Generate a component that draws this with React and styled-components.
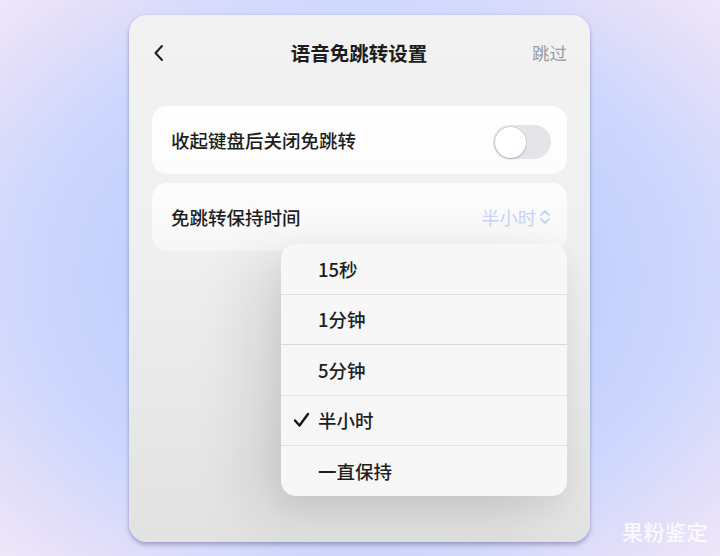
import React, { useState } from "react";
import styled, { createGlobalStyle } from "styled-components";

const GlobalStyle = createGlobalStyle`
  html, body {
    margin: 0;
    padding: 0;
  }
  body {
    font-family: "Noto Sans CJK SC", "Noto Sans", sans-serif;
  }
`;

const Page = styled.div`
  width: 720px;
  height: 556px;
  overflow: hidden;
  position: relative;
  display: flex;
  justify-content: center;
  align-items: flex-start;
  background: radial-gradient(ellipse at 50% 50%, #c0cdfc 0%, #c4d1fd 45%, #cfd8fd 68%, #e2def9 85%, #efe6fa 100%);
`;

const Phone = styled.div`
  position: relative;
  margin-top: 15px;
  margin-left: -1px;
  width: 461px;
  height: 527px;
  border-radius: 18px;
  background: linear-gradient(180deg, #f2f2f2 0%, #efefef 45%, #e2e2e2 100%);
  box-shadow: 0 3px 4px rgba(60, 70, 120, 0.35), 0 0 2px rgba(60, 70, 120, 0.2);
  display: flex;
  flex-direction: column;
`;

const Header = styled.div`
  height: 75px;
  padding: 0 24px;
  display: flex;
  align-items: center;
  justify-content: space-between;
`;

const BackButton = styled.div`
  width: 40px;
  display: flex;
  align-items: center;
`;

const Title = styled.div`
  font-size: 19.5px;
  font-weight: 700;
  color: #1c1c1c;
  margin-left: -2px;
`;

const Skip = styled.div`
  width: 40px;
  text-align: right;
  font-size: 17.5px;
  color: #979ba5;
  margin-right: -1px;
`;

const List = styled.div`
  display: flex;
  flex-direction: column;
  gap: 9px;
  padding: 16px 23px 0 23px;
`;

const Row = styled.div`
  height: 68px;
  border-radius: 15px;
  background: ${({ $fade }) =>
    $fade
      ? "linear-gradient(180deg, #fdfdfd 0%, #f6f6f6 100%)"
      : "linear-gradient(180deg, #ffffff 0%, #fcfcfc 100%)"};
  display: flex;
  align-items: center;
  justify-content: space-between;
  padding: 0 16px 0 19px;
`;

const Label = styled.div`
  font-size: 18.5px;
  font-weight: 500;
  color: #1e1e1e;
`;

const Track = styled.div`
  width: 58px;
  height: 34px;
  margin-top: 4px;
  border-radius: 17px;
  background: #e5e5e9;
  display: flex;
  align-items: center;
  padding: 0 2px;
  box-sizing: border-box;
  justify-content: ${({ $on }) => ($on ? "flex-end" : "flex-start")};
  cursor: pointer;
`;

const Knob = styled.div`
  width: 31px;
  height: 31px;
  border-radius: 50%;
  background: #ffffff;
  box-shadow: 0 1px 2px rgba(80, 80, 120, 0.35), 0 0 0 0.5px rgba(150, 150, 180, 0.4);
`;

const Value = styled.div`
  display: flex;
  align-items: center;
  gap: 3px;
  font-size: 18.3px;
  color: #c6d3f4;
`;

const Menu = styled.div`
  position: absolute;
  left: 152px;
  top: 229px;
  width: 286px;
  border-radius: 15px;
  background: #f7f7f7;
  overflow: hidden;
  box-shadow: -30px 20px 60px rgba(0, 0, 0, 0.1), 0 10px 30px rgba(0, 0, 0, 0.06);
`;

const Option = styled.div`
  height: 49.5px;
  display: flex;
  align-items: center;
  border-top: ${({ $first, $line }) => ($first ? "none" : `1px solid ${$line}`)};
  font-size: 18.5px;
  font-weight: 500;
  color: #1e1e1e;
`;

const CheckSlot = styled.div`
  width: 37px;
  display: flex;
  justify-content: flex-end;
`;

const Watermark = styled.div`
  position: absolute;
  right: 12px;
  bottom: 10px;
  font-size: 21px;
  font-weight: 500;
  color: rgba(255, 255, 255, 0.85);
  letter-spacing: 0.5px;
`;

const options = [
  { text: "15秒", line: "#dedede" },
  { text: "1分钟", line: "#dedede" },
  { text: "5分钟", line: "#d8d8e4" },
  { text: "半小时", line: "#e4e4e4" },
  { text: "一直保持", line: "#e2e2e2" },
];

const App = () => {
  const [on, setOn] = useState(false);
  const selected = "半小时";

  return (
    <>
      <GlobalStyle />
      <Page>
        <Phone>
          <Header>
            <BackButton>
              <svg width="12" height="18" viewBox="0 0 12 18">
                <polyline
                  points="9,2 2.5,9 9,16"
                  fill="none"
                  stroke="#1c1c1c"
                  strokeWidth="2"
                  strokeLinecap="round"
                  strokeLinejoin="round"
                />
              </svg>
            </BackButton>
            <Title>语音免跳转设置</Title>
            <Skip>跳过</Skip>
          </Header>

          <List>
            <Row>
              <Label>收起键盘后关闭免跳转</Label>
              <Track $on={on} onClick={() => setOn(!on)}>
                <Knob />
              </Track>
            </Row>
            <Row $fade>
              <Label>免跳转保持时间</Label>
              <Value>
                半小时
                <svg width="12" height="18" viewBox="0 0 12 18">
                  <polyline
                    points="2,7 6,3 10,7"
                    fill="none"
                    stroke="#c6d3f4"
                    strokeWidth="1.8"
                    strokeLinecap="round"
                    strokeLinejoin="round"
                  />
                  <polyline
                    points="2,11 6,15 10,11"
                    fill="none"
                    stroke="#c6d3f4"
                    strokeWidth="1.8"
                    strokeLinecap="round"
                    strokeLinejoin="round"
                  />
                </svg>
              </Value>
            </Row>
          </List>

          <Menu>
            {options.map((o, i) => (
              <Option key={o.text} $first={i === 0} $line={o.line}>
                <CheckSlot>
                  {o.text === selected && (
                    <svg width="17" height="16" viewBox="0 0 17 16" style={{ marginRight: 8 }}>
                      <polyline
                        points="2,8.5 6.5,13.5 15,2"
                        fill="none"
                        stroke="#111"
                        strokeWidth="2.4"
                        strokeLinecap="round"
                        strokeLinejoin="round"
                      />
                    </svg>
                  )}
                </CheckSlot>
                <div>{o.text}</div>
              </Option>
            ))}
          </Menu>
        </Phone>
        <Watermark>果粉鉴定</Watermark>
      </Page>
    </>
  );
};

export default App;
